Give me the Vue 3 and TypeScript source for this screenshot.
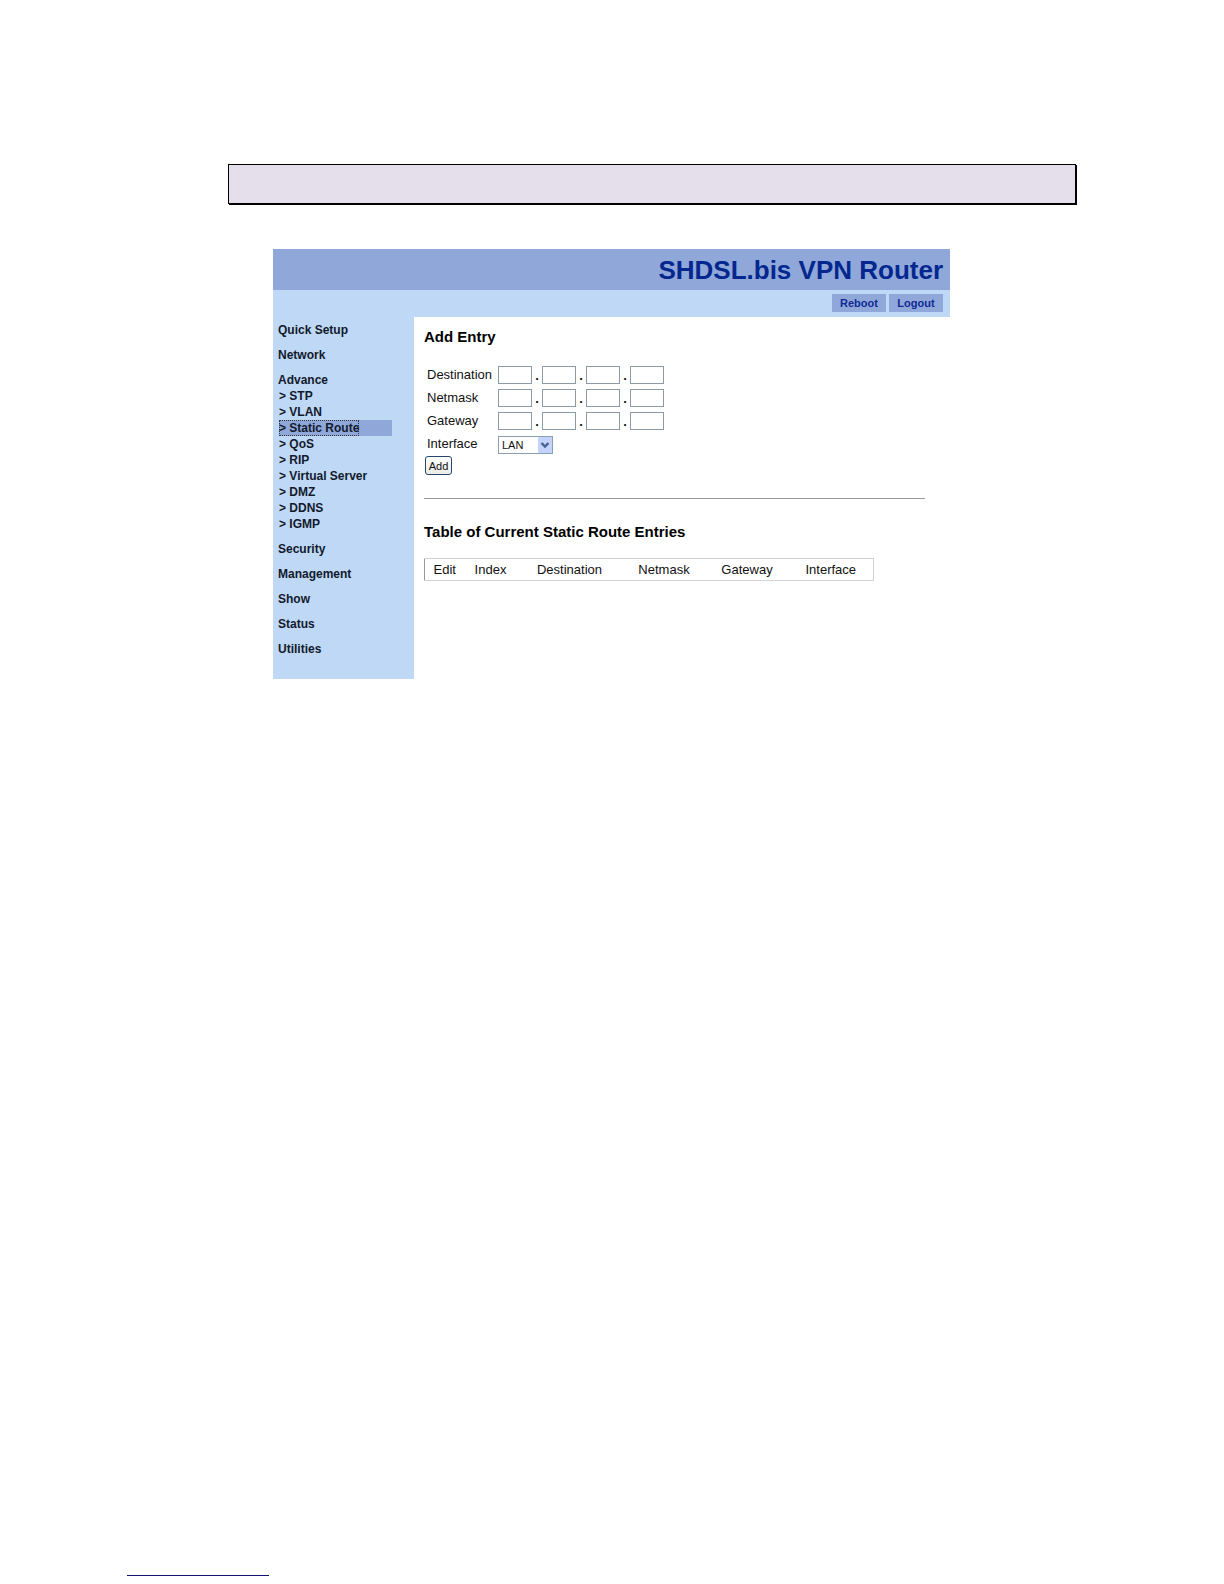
<script setup lang="ts">
import { ref } from 'vue'

interface MenuGroup {
  label: string
  items?: string[]
}

const menu: MenuGroup[] = [
  { label: 'Quick Setup' },
  { label: 'Network' },
  {
    label: 'Advance',
    items: ['STP', 'VLAN', 'Static Route', 'QoS', 'RIP', 'Virtual Server', 'DMZ', 'DDNS', 'IGMP'],
  },
  { label: 'Security' },
  { label: 'Management' },
  { label: 'Show' },
  { label: 'Status' },
  { label: 'Utilities' },
]
const current = ref('Static Route')

const addresses = ref([
  { label: 'Destination', octets: ['', '', '', ''] },
  { label: 'Netmask', octets: ['', '', '', ''] },
  { label: 'Gateway', octets: ['', '', '', ''] },
])
const iface = ref('LAN')
const columns = ['Edit', 'Index', 'Destination', 'Netmask', 'Gateway', 'Interface']
</script>

<template>
  <div class="page">
    <div class="banner"></div>

    <div class="router">
      <header class="title-bar">
        <h1>SHDSL.bis VPN Router</h1>
      </header>
      <div class="tool-bar">
        <button type="button">Reboot</button>
        <button type="button">Logout</button>
      </div>

      <div class="body">
        <nav class="sidebar">
          <ul class="menu">
            <li v-for="group in menu" :key="group.label">
              <a href="#">{{ group.label }}</a>
              <ul v-if="group.items" class="submenu">
                <li v-for="item in group.items" :key="item" :class="{ active: item === current }">
                  <a href="#" @click.prevent="current = item">&gt; {{ item }}</a>
                </li>
              </ul>
            </li>
          </ul>
        </nav>

        <main class="content">
          <h2>Add Entry</h2>
          <form @submit.prevent>
            <div v-for="row in addresses" :key="row.label" class="field">
              <label :for="row.label + '-0'">{{ row.label }}</label>
              <div class="octets">
                <template v-for="(_, i) in row.octets" :key="i">
                  <span v-if="i > 0" class="dot">.</span>
                  <input
                    :id="row.label + '-' + i"
                    v-model="row.octets[i]"
                    type="text"
                    maxlength="3"
                    :aria-label="row.label + ' ' + (i + 1)"
                  />
                </template>
              </div>
            </div>
            <div class="field">
              <label for="iface">Interface</label>
              <div class="picker">
                <select id="iface" v-model="iface">
                  <option>LAN</option>
                  <option>WAN</option>
                </select>
                <svg viewBox="0 0 14 16" aria-hidden="true">
                  <rect width="14" height="16" rx="1" fill="#c3d3fb" />
                  <path d="M3.5 6 L7 9.5 L10.5 6" fill="none" stroke="#48608f" stroke-width="2.4" />
                </svg>
              </div>
            </div>
            <button type="submit" class="add">Add</button>
          </form>

          <hr />

          <h2>Table of Current Static Route Entries</h2>
          <table>
            <colgroup>
              <col v-for="name in columns" :key="name" :class="'col-' + name.toLowerCase()" />
            </colgroup>
            <thead>
              <tr>
                <th v-for="name in columns" :key="name" scope="col">{{ name }}</th>
              </tr>
            </thead>
          </table>
        </main>
      </div>
    </div>

    <div class="foot-rule"></div>
  </div>
</template>

<style>
body {
  margin: 0;
  background: #fff;
}
</style>

<style scoped>
.page {
  box-sizing: border-box;
  min-height: 100vh;
  padding: 164px 0 8px;
  display: flex;
  flex-direction: column;
  font-family: 'Liberation Sans', Arial, sans-serif;
  font-size: 13px;
  color: #111;
}
.banner {
  box-sizing: border-box;
  height: 40px;
  margin: 0 148px 0 228px;
  background: #e4dfea;
  border: 1px solid #000;
  box-shadow: 1px 1px 0 #000;
}
.router {
  margin: 45px 274px 0 273px;
}
.title-bar {
  background: #8fa8d9;
  padding: 2px 7px 0;
}
h1 {
  margin: 0;
  font-size: 26px;
  line-height: 39px;
  text-align: right;
  color: #04278f;
}
.tool-bar {
  display: flex;
  justify-content: flex-end;
  gap: 3px;
  padding: 4px 7px 5px;
  background: #bfd8f6;
}
.tool-bar button {
  width: 54px;
  height: 18px;
  padding: 0;
  border: 0;
  background: #8fa8d9;
  color: #102a94;
  font: bold 11px/18px 'Liberation Sans', Arial, sans-serif;
}
.body {
  display: flex;
}
.sidebar {
  box-sizing: border-box;
  flex: 0 0 141px;
  padding: 5px 5px 22px;
  background: #bfd8f6;
  font-size: 12px;
  font-weight: bold;
  line-height: 16px;
}
ul {
  margin: 0;
  padding: 0;
  list-style: none;
}
.menu {
  display: flex;
  flex-direction: column;
  gap: 9px;
}
.sidebar a {
  display: block;
  color: #111a2c;
  text-decoration: none;
}
.submenu {
  margin: 0 17px 0 1px;
}
.active {
  background: #8fa8d9;
}
.active a {
  width: max-content;
  outline: 1px dotted #333;
  outline-offset: -1px;
}
.content {
  flex: 1;
  padding: 10px 25px 0 10px;
}
h2 {
  margin: 0;
  font-size: 15px;
  line-height: 20px;
  color: #000;
}
form {
  margin-top: 20px;
}
.field {
  display: flex;
  align-items: center;
  height: 18px;
  margin-bottom: 5px;
}
.field label {
  width: 71px;
  padding: 0 0 3px 3px;
}
.octets {
  display: flex;
}
.octets input {
  box-sizing: border-box;
  width: 34px;
  height: 18px;
  padding: 0 2px;
  border: 1px solid #8b9aa5;
  background: #fff;
  font: inherit;
}
.dot {
  width: 10px;
  text-align: center;
  font-weight: bold;
  line-height: 20px;
}
.picker {
  position: relative;
}
.picker select {
  display: block;
  box-sizing: border-box;
  width: 55px;
  height: 18px;
  padding: 0 3px;
  border: 1px solid #8b9fb3;
  border-radius: 0;
  background: #fff;
  color: #111;
  appearance: none;
  font: 11px 'Liberation Sans', Arial, sans-serif;
}
.picker svg {
  position: absolute;
  top: 1px;
  right: 1px;
  width: 14px;
  height: 16px;
  pointer-events: none;
}
.add {
  display: block;
  width: 27px;
  height: 19px;
  margin: -3px 0 0 1px;
  padding: 0;
  border: 1px solid #24486e;
  border-radius: 3px;
  background: linear-gradient(#fff, #ecebe6);
  color: #111;
  font: 11px 'Liberation Sans', Arial, sans-serif;
}
hr {
  margin: 23px 0;
  border: 0;
  border-top: 1px solid #999;
}
table {
  width: 450px;
  margin-top: 16px;
  table-layout: fixed;
  border-collapse: collapse;
  border: 1px solid #d2d2d2;
  border-left-color: #999;
}
th {
  padding: 0;
  font-weight: normal;
  line-height: 21px;
}
.col-edit {
  width: 40px;
}
.col-index {
  width: 52px;
}
.col-destination {
  width: 106px;
}
.col-netmask,
.col-gateway {
  width: 83px;
}
.foot-rule {
  width: 142px;
  height: 1px;
  margin: auto 0 0 127px;
  background: #14146e;
}
</style>
